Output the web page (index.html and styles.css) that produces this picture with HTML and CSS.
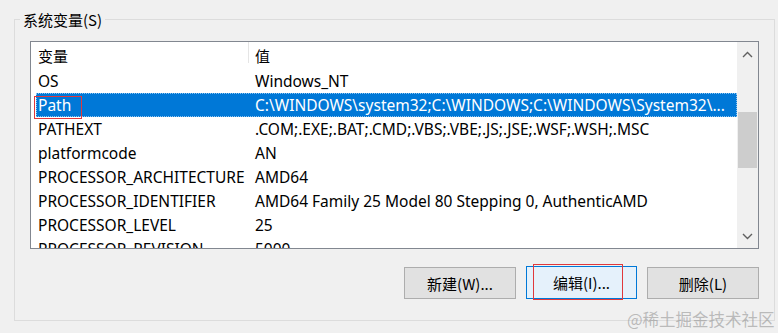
FILE: index.html
```html
<!DOCTYPE html>
<html lang="zh-CN">
<head>
<meta charset="utf-8">
<title>系统变量</title>
<link rel="stylesheet" href="styles.css">
</head>
<body>
<div class="group">
  <div class="legend">系统变量(S)</div>
  <div class="listbox">
    <div class="rows">
      <div class="row head"><div class="c1">变量</div><div class="c2">值</div></div>
      <div class="row"><div class="c1">OS</div><div class="c2">Windows_NT</div></div>
      <div class="row sel"><div class="c1">Path</div><div class="c2">C:\WINDOWS\system32;C:\WINDOWS;C:\WINDOWS\System32\...</div></div>
      <div class="row"><div class="c1">PATHEXT</div><div class="c2">.COM;.EXE;.BAT;.CMD;.VBS;.VBE;.JS;.JSE;.WSF;.WSH;.MSC</div></div>
      <div class="row"><div class="c1">platformcode</div><div class="c2">AN</div></div>
      <div class="row"><div class="c1">PROCESSOR_ARCHITECTURE</div><div class="c2">AMD64</div></div>
      <div class="row"><div class="c1">PROCESSOR_IDENTIFIER</div><div class="c2">AMD64 Family 25 Model 80 Stepping 0, AuthenticAMD</div></div>
      <div class="row"><div class="c1">PROCESSOR_LEVEL</div><div class="c2">25</div></div>
      <div class="row"><div class="c1">PROCESSOR_REVISION</div><div class="c2">5000</div></div>
    </div>
    <div class="scrollbar">
      <div class="arrow"><svg width="11" height="7" viewBox="0 0 11 7"><path d="M1 6 L5.5 1.5 L10 6" fill="none" stroke="#606060" stroke-width="1.4"/></svg></div>
      <div class="track"><div class="thumb"></div></div>
      <div class="arrow"><svg width="11" height="7" viewBox="0 0 11 7"><path d="M1 1 L5.5 5.5 L10 1" fill="none" stroke="#606060" stroke-width="1.4"/></svg></div>
    </div>
  </div>
  <div class="buttons">
    <button class="btn">新建(W)...</button>
    <button class="btn focus">编辑(I)...</button>
    <button class="btn">删除(L)</button>
  </div>
</div>
<div class="mark mark-path"></div>
<div class="mark mark-edit"></div>
<div class="watermark">@稀土掘金技术社区</div>
</body>
</html>
```

FILE: styles.css
```css
html, body {
  margin: 0;
  padding: 0;
}
body {
  width: 778px;
  height: 333px;
  overflow: hidden;
  background: #f0f0f0;
  font-family: "Noto Sans", "Noto Sans CJK SC", sans-serif;
  font-size: 15.5px;
  color: #000;
  position: relative;
}
.group {
  box-sizing: border-box;
  margin: 19px 3px 0 14px;
  height: 302px;
  border: 1px solid #dcdcdc;
  padding: 0 15px;
}
.legend {
  width: fit-content;
  margin: -10px 0 0 -10px;
  padding: 0 3px;
  height: 20px;
  line-height: 20px;
  background: #f0f0f0;
  font-family: "Noto Sans CJK SC", sans-serif;
  font-size: 15px;
}
.listbox {
  margin-top: 11px;
  box-sizing: border-box;
  height: 208px;
  border: 1px solid #828790;
  background: #fff;
  display: flex;
}
.rows {
  flex: 1;
  overflow: hidden;
  padding-left: 5px;
}
.row {
  display: grid;
  grid-template-columns: 213px 1fr;
  height: 24px;
  line-height: 24px;
  white-space: nowrap;
}
.row .c1 {
  padding-left: 2px;
  overflow: hidden;
}
.row .c2 {
  padding-left: 6px;
  overflow: hidden;
}
.row.head {
  height: 27px;
  line-height: 27px;
  font-family: "Noto Sans CJK SC", sans-serif;
  font-size: 15px;
}
.row.head .c1 {
  border-right: 1px solid #e5e5e5;
  height: 21px;
  line-height: 27px;
  overflow: visible;
}
.row.sel {
  background: #0078d7;
  color: #fff;
  outline: 1px dotted #8cc4f0;
  outline-offset: -1px;
}
.scrollbar {
  width: 21px;
  background: #f0f0f0;
  display: flex;
  flex-direction: column;
}
.arrow {
  height: 24px;
  display: flex;
  align-items: center;
  justify-content: center;
}
.track {
  flex: 1;
}
.thumb {
  margin: 46px 1px 0 1px;
  height: 56px;
  background: #cdcdcd;
}
.buttons {
  display: flex;
  justify-content: flex-end;
  align-items: flex-start;
  gap: 10px;
  margin-top: 18px;
}
.btn {
  box-sizing: border-box;
  width: 112px;
  height: 32px;
  border: 1px solid #adadad;
  background: #e1e1e1;
  font-family: "Noto Sans CJK SC", sans-serif;
  font-size: 15px;
  color: #000;
  padding: 0;
}
.btn.focus {
  width: 111px;
  height: 33px;
  margin-top: -1px;
  border-color: #0078d7;
  background: #e5f1fb;
}
.mark {
  position: absolute;
  border: 1px solid #e0383c;
  box-sizing: border-box;
}
.mark-path {
  left: 34px;
  top: 96px;
  width: 48px;
  height: 23px;
}
.mark-edit {
  left: 533px;
  top: 264px;
  width: 90px;
  height: 36px;
}
.watermark {
  position: absolute;
  left: 627px;
  top: 307px;
  font-family: "Noto Sans CJK SC", sans-serif;
  font-size: 16.5px;
  line-height: 24px;
  color: rgba(140, 140, 140, 0.55);
  white-space: nowrap;
}
```
